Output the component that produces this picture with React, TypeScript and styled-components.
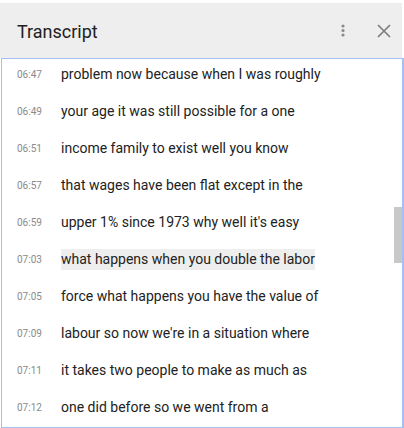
import React from "react";
import styled, { createGlobalStyle } from "styled-components";

const Global = createGlobalStyle`
  html, body { margin: 0; padding: 0; background: #ffffff; }
  body { font-family: Roboto, "Noto Sans", Arial, sans-serif; }
  * { box-sizing: border-box; }
`;

const Panel = styled.div`
  width: 404px;
  height: 428px;
  padding-top: 3px;
  display: flex;
  flex-direction: column;
  overflow: hidden;
`;

const Header = styled.div`
  width: 402px;
  height: 55px;
  flex: 0 0 auto;
  background: #eeeeee;
  display: flex;
  align-items: center;
  padding-left: 17px;
  padding-right: 6px;
`;

const Title = styled.div`
  font-size: 18px;
  color: #212121;
  flex: 1;
  margin-top: 2px;
`;

const IconButton = styled.button<{ $gap?: number }>`
  border: 0;
  background: transparent;
  padding: 0;
  width: 24px;
  height: 24px;
  display: flex;
  align-items: center;
  justify-content: center;
  margin-left: ${(p) => p.$gap ?? 0}px;
`;

const Body = styled.div`
  position: relative;
  flex: 1;
  margin-left: 1px;
  width: 403px;
  border: 1px solid #a2c0f4;
  border-right-width: 2px;
  overflow: hidden;
  padding-top: 5px;
`;

const Row = styled.div`
  display: flex;
  align-items: center;
  height: 21px;
  margin-bottom: 16px;
`;

const Time = styled.span`
  width: 59px;
  padding-left: 15px;
  font-size: 10px;
  color: #8a8a8a;
  flex: 0 0 auto;
`;

const Text = styled.span<{ $active?: boolean }>`
  font-size: 14px;
  color: #222222;
  line-height: 21px;
  background: ${(p) => (p.$active ? "#eeeeee" : "transparent")};
  white-space: nowrap;
`;

const Thumb = styled.div`
  position: absolute;
  right: 0;
  top: 148px;
  width: 8px;
  height: 56px;
  background: #c8c8c8;
`;

const lines: [string, string][] = [
  ["06:47", "problem now because when I was roughly"],
  ["06:49", "your age it was still possible for a one"],
  ["06:51", "income family to exist well you know"],
  ["06:57", "that wages have been flat except in the"],
  ["06:59", "upper 1% since 1973 why well it's easy"],
  ["07:03", "what happens when you double the labor"],
  ["07:05", "force what happens you have the value of"],
  ["07:09", "labour so now we're in a situation where"],
  ["07:11", "it takes two people to make as much as"],
  ["07:12", "one did before so we went from a"],
];

export default function App() {
  return (
    <>
      <Global />
      <Panel>
        <Header>
          <Title>Transcript</Title>
          <IconButton aria-label="More">
            <svg width="4" height="13" viewBox="0 0 4 13">
              <circle cx="2" cy="2" r="1.6" fill="#8a8a8a" />
              <circle cx="2" cy="6.5" r="1.6" fill="#8a8a8a" />
              <circle cx="2" cy="11" r="1.6" fill="#8a8a8a" />
            </svg>
          </IconButton>
          <IconButton aria-label="Close" $gap={17}>
            <svg width="14" height="14" viewBox="0 0 14 14">
              <path d="M1 1 L13 13 M13 1 L1 13" stroke="#7a7a7a" strokeWidth="1.6" fill="none" />
            </svg>
          </IconButton>
        </Header>
        <Body>
          {lines.map(([t, s]) => (
            <Row key={t}>
              <Time>{t}</Time>
              <Text $active={t === "07:03"}>{s}</Text>
            </Row>
          ))}
          <Thumb />
        </Body>
      </Panel>
    </>
  );
}
